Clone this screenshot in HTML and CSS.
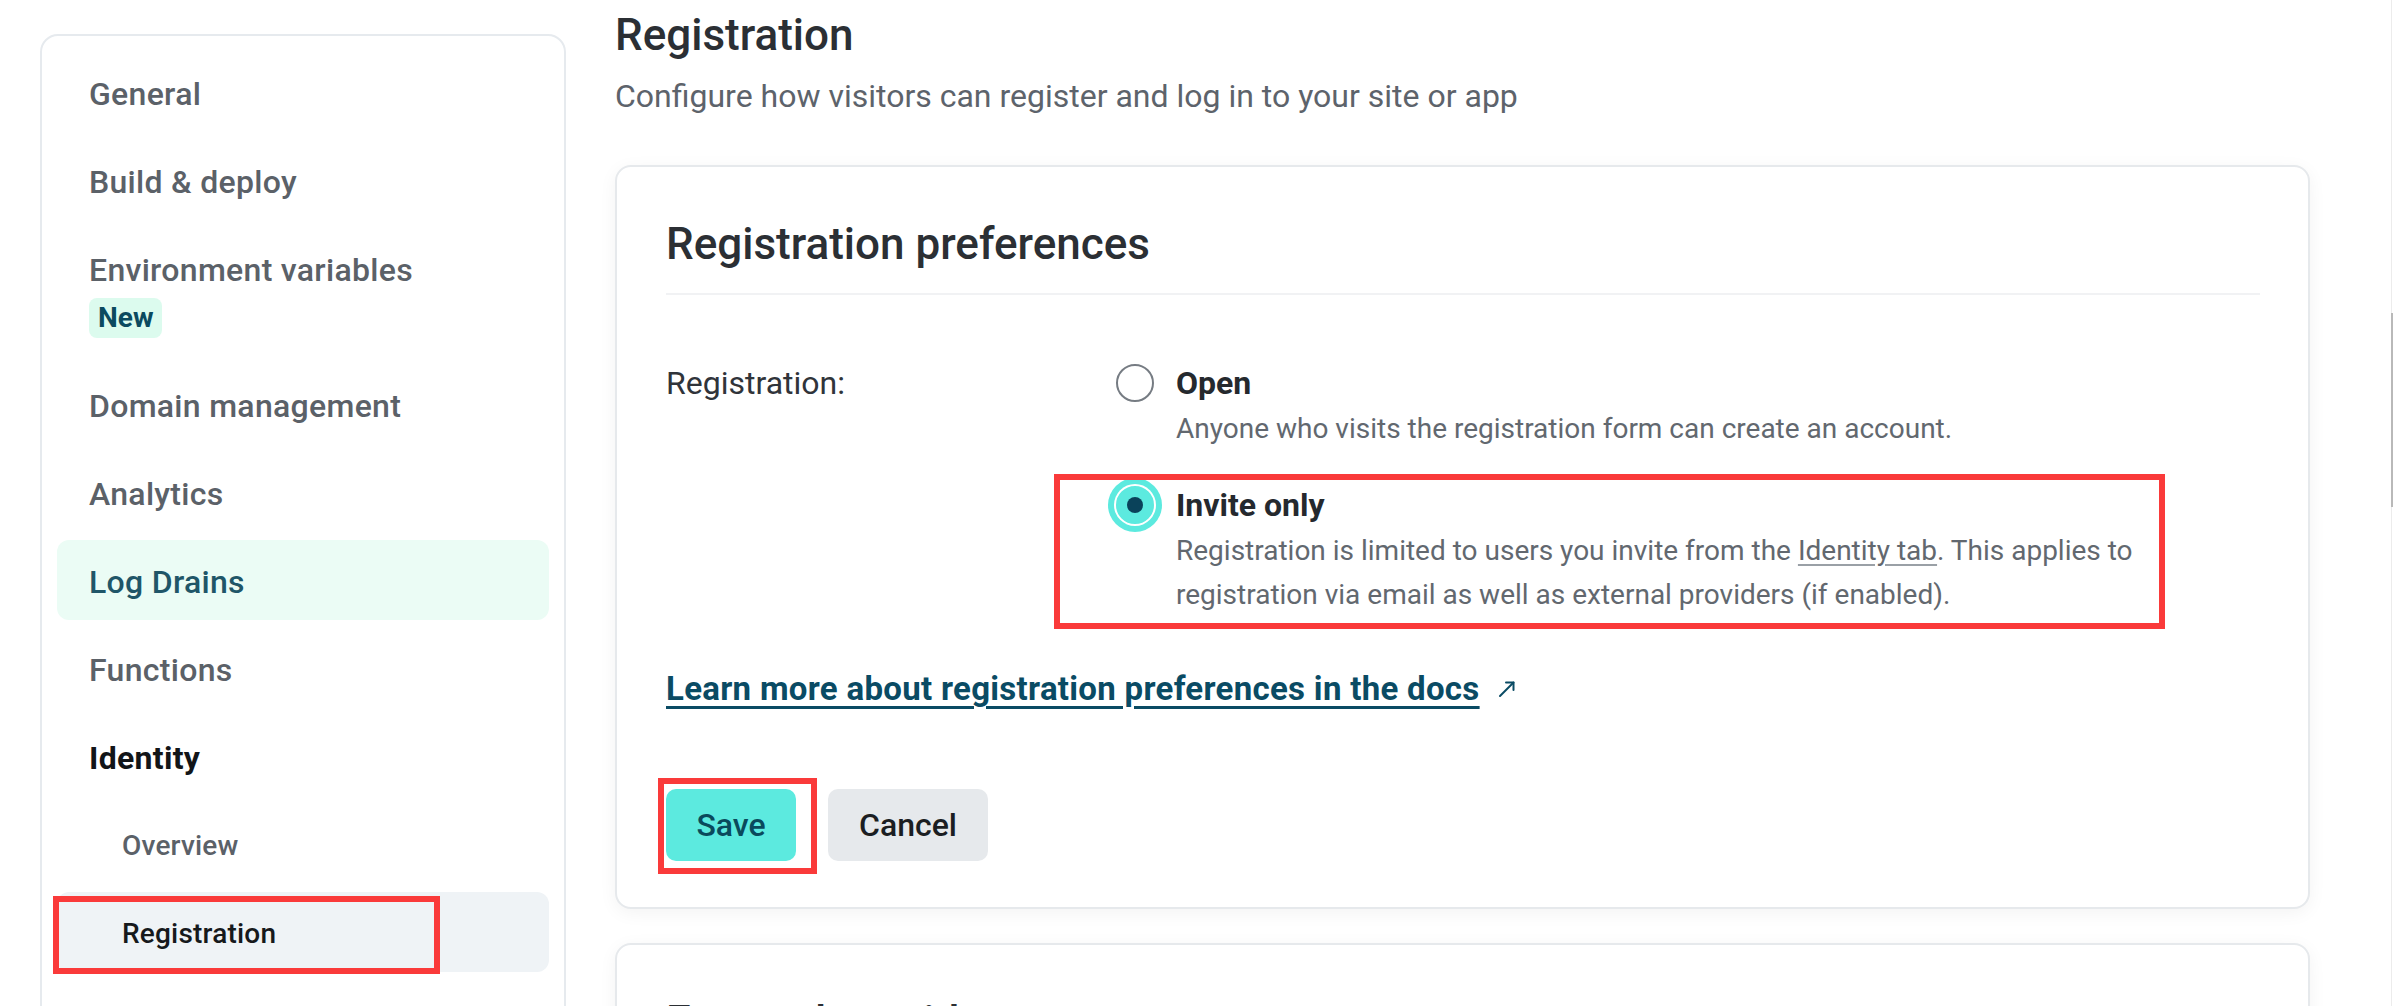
FILE: index.html
```html
<!DOCTYPE html>
<html lang="en">
<head>
<meta charset="utf-8">
<title>Registration</title>
<link rel="stylesheet" href="styles.css">
</head>
<body>
<div class="layout">
  <aside class="sidebar">
    <nav class="nav">
      <a class="nav-item" href="#">General</a>
      <a class="nav-item" href="#">Build &amp; deploy</a>
      <a class="nav-item nav-item-env" href="#">Environment variables <span class="badge">New</span></a>
      <a class="nav-item" href="#">Domain management</a>
      <a class="nav-item" href="#">Analytics</a>
      <a class="nav-item is-soft" href="#">Log Drains</a>
      <a class="nav-item" href="#">Functions</a>
      <a class="nav-item is-current" href="#">Identity</a>
      <a class="nav-sub" href="#">Overview</a>
      <a class="nav-sub is-selected" href="#">Registration<span class="annot annot-nav"></span></a>
    </nav>
  </aside>

  <main class="main">
    <h1 class="page-title">Registration</h1>
    <p class="lead">Configure how visitors can register and log in to your site or app</p>

    <section class="card">
      <h2 class="card-title">Registration preferences</h2>
      <div class="form-row">
        <div class="form-label">Registration:</div>
        <div class="options">
          <div class="option">
            <span class="radio"></span>
            <div class="option-body">
              <div class="option-title">Open</div>
              <div class="option-desc">Anyone who visits the registration form can create an account.</div>
            </div>
          </div>
          <div class="option">
            <span class="radio is-checked"><span class="radio-dot"></span></span>
            <div class="option-body">
              <div class="option-title">Invite only</div>
              <div class="option-desc">Registration is limited to users you invite from the <a class="inline-link" href="#">Identity tab</a>. This applies to registration via email as well as external providers (if enabled).</div>
            </div>
            <span class="annot annot-invite"></span>
          </div>
        </div>
      </div>

      <div class="doc-row">
        <a class="doc-link" href="#">Learn more about registration preferences in the docs</a>
        <svg class="doc-arrow" width="18" height="18" viewBox="0 0 18 18" aria-hidden="true">
          <path d="M2 16 L15.5 2.5" fill="none" stroke="#0a4b64" stroke-width="2" stroke-linecap="round"/>
          <path d="M8 2.5 H15.5 V10" fill="none" stroke="#0a4b64" stroke-width="2" stroke-linecap="round" stroke-linejoin="round"/>
        </svg>
      </div>

      <div class="actions">
        <span class="save-wrap">
          <button class="btn btn-save" type="button">Save</button>
          <span class="annot annot-save"></span>
        </span>
        <button class="btn btn-cancel" type="button">Cancel</button>
      </div>
    </section>

    <section class="card card-next">
      <h2 class="card-title">External providers</h2>
    </section>
  </main>
</div>
<div class="scroll-track"></div>
<div class="scroll-thumb"></div>
</body>
</html>
```

FILE: styles.css
```css
* { box-sizing: border-box; }

html, body {
  margin: 0;
  height: 100%;
  overflow: hidden;
  background: #ffffff;
}

body {
  font-family: Roboto, "Noto Sans", "Liberation Sans", sans-serif;
  color: #2b2f34;
}

.layout {
  display: flex;
  align-items: flex-start;
  gap: 49px;
  padding-left: 40px;
}

/* Sidebar */
.sidebar {
  flex: none;
  width: 526px;
  min-height: 1100px;
  margin-top: 34px;
  border: 2px solid #e6eaee;
  border-radius: 18px;
  padding: 16px 15px;
}

.nav {
  display: flex;
  flex-direction: column;
  gap: 8px;
}

.nav-item {
  display: block;
  padding: 18px 32px 14px;
  border-radius: 12px;
  font-size: 32px;
  line-height: 48px;
  font-weight: 500;
  letter-spacing: 0.3px;
  color: #5b6168;
  text-decoration: none;
}

.nav-item.is-soft {
  background: #ebfcf5;
  color: #1f5668;
}

.nav-item.is-current {
  color: #121518;
  font-weight: 700;
}

.badge {
  display: block;
  width: fit-content;
  margin: 4px 0 4px;
  padding: 0 9px;
  height: 40px;
  line-height: 40px;
  font-size: 28px;
  font-weight: 700;
  letter-spacing: 0;
  color: #0b4a5f;
  background: #dcfbee;
  border-radius: 8px;
}

.nav-sub {
  position: relative;
  display: block;
  padding: 18px 32px 14px 65px;
  border-radius: 12px;
  font-size: 28px;
  line-height: 48px;
  font-weight: 500;
  letter-spacing: 0.2px;
  color: #5b6168;
  text-decoration: none;
}

.nav-sub.is-selected {
  background: #eff3f6;
  color: #16191c;
}

/* Annotation boxes */
.annot {
  position: absolute;
  border: 6px solid #fa3a3a;
  pointer-events: none;
}

.annot-nav {
  left: -4px;
  top: 4px;
  width: 387px;
  height: 78px;
}

.annot-invite {
  left: -62px;
  top: -7px;
  width: 1111px;
  height: 155px;
}

.annot-save {
  left: -8px;
  top: -11px;
  width: 159px;
  height: 96px;
}

/* Main */
.main {
  flex: none;
  width: 1695px;
  padding-top: 7px;
}

.page-title {
  margin: 0;
  font-size: 44px;
  line-height: 56px;
  font-weight: 500;
  color: #2b2f34;
}

.lead {
  margin: 9px 0 0;
  font-size: 32px;
  line-height: 48px;
  color: #5d636b;
}

.card {
  margin-top: 45px;
  border: 2px solid #e6e9ec;
  border-radius: 16px;
  padding: 49px 48px 46px 49px;
  background: #fff;
  box-shadow: 0 4px 18px rgba(0, 0, 0, 0.05);
}

.card-next {
  margin-top: 34px;
  min-height: 300px;
}

.card-title {
  margin: 0;
  padding-bottom: 21px;
  border-bottom: 2px solid #f1f2f4;
  font-size: 44px;
  line-height: 56px;
  font-weight: 500;
  color: #2b2f34;
}

.form-row {
  display: flex;
  margin-top: 64px;
}

.form-label {
  flex: none;
  width: 450px;
  font-size: 32px;
  line-height: 48px;
  color: #30343a;
}

.options {
  display: flex;
  flex-direction: column;
  gap: 30px;
}

.option {
  position: relative;
  display: flex;
  gap: 22px;
}

.radio {
  flex: none;
  width: 38px;
  height: 38px;
  margin-top: 5px;
  border-radius: 50%;
  border: 2px solid #767c83;
  background: #fff;
}

.radio.is-checked {
  display: grid;
  place-items: center;
  background: #5ceadf;
  border-color: #5ceadf;
  box-shadow: 0 0 0 2px #ffffff, 0 0 0 8px #5ceadf;
}

.radio-dot {
  width: 16px;
  height: 16px;
  border-radius: 50%;
  background: #0a425a;
}

.option-title {
  font-size: 32px;
  line-height: 48px;
  font-weight: 700;
  color: #25292e;
}

.option-desc {
  font-size: 28px;
  line-height: 44px;
  color: #62686f;
}

.inline-link {
  color: #62686f;
  text-decoration: underline;
  text-decoration-color: #9aa0a6;
  text-underline-offset: 4px;
}

.doc-row {
  display: flex;
  align-items: center;
  margin-top: 48px;
  line-height: 48px;
}

.doc-link {
  font-size: 33px;
  font-weight: 700;
  letter-spacing: 0.3px;
  color: #0a4b64;
  text-decoration: underline;
  text-decoration-thickness: 3px;
  text-underline-offset: 6px;
}

.doc-arrow {
  margin-left: 18px;
  flex: none;
}

.actions {
  display: flex;
  gap: 32px;
  margin-top: 76px;
}

.save-wrap {
  position: relative;
  display: inline-flex;
}

.btn {
  height: 72px;
  border: 0;
  border-radius: 10px;
  font-family: inherit;
  font-size: 32px;
  font-weight: 500;
  padding: 0;
}

.btn-save {
  width: 130px;
  background: #5ceadf;
  color: #0a4a5c;
}

.btn-cancel {
  width: 160px;
  background: #e6e9ec;
  color: #1b1e22;
}

/* Scrollbar indicator */
.scroll-track {
  position: fixed;
  top: 0;
  right: 2px;
  width: 1px;
  height: 100%;
  background: #ececec;
}

.scroll-thumb {
  position: fixed;
  top: 313px;
  right: 1px;
  width: 2px;
  height: 194px;
  background: #b9b9b9;
}
```
